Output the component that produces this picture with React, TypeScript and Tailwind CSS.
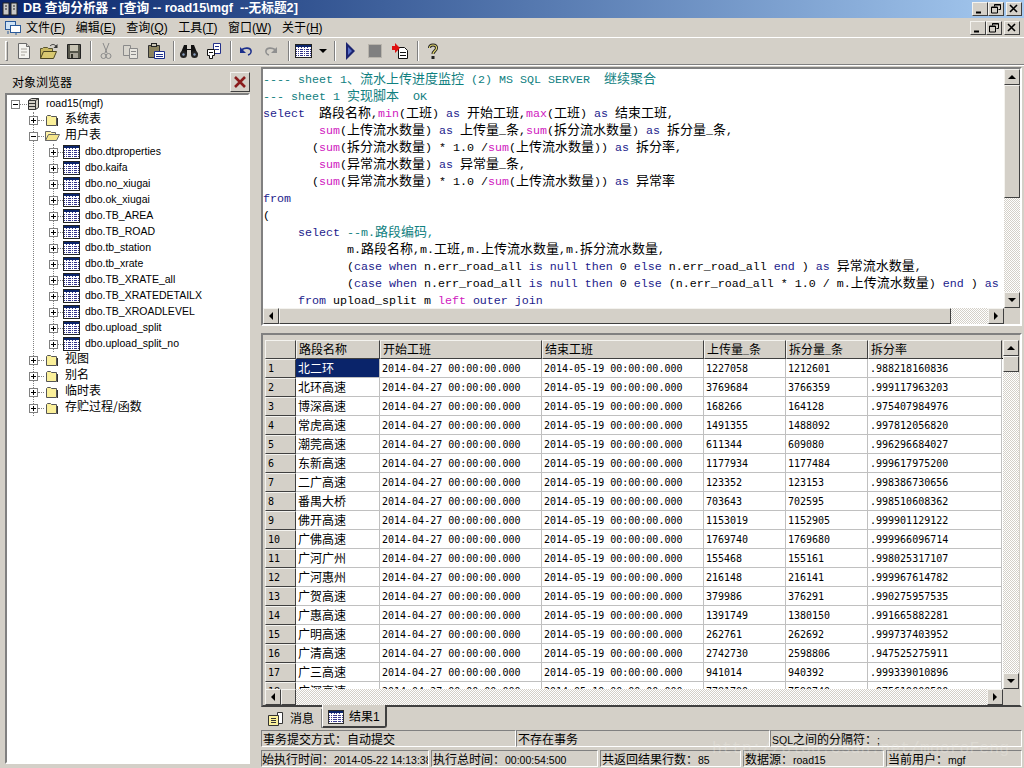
import type { ReactNode } from 'react';

const CJK = /([\u3000-\u9fff\uff00-\uffef]+)/;

// latin and CJK need different sizes to get the half-width grid of the old GDI fonts
function Mixed({ text, latin, cjk }: { text: string; latin: string; cjk: string }) {
  return (
    <>
      {text.split(CJK).map((part, i) =>
        part === '' ? null : (
          <span key={i} className={i % 2 === 1 ? cjk : latin}>
            {part}
          </span>
        ),
      )}
    </>
  );
}

function Arrow({ dir, color = '#000' }: { dir: 'up' | 'down' | 'left' | 'right'; color?: string }) {
  const pts = {
    up: '4,1 0,5 8,5',
    down: '0,1 8,1 4,5',
    left: '5,0 5,8 1,4',
    right: '1,0 1,8 5,4',
  }[dir];
  const size = dir === 'up' || dir === 'down' ? 'w-2 h-[6px]' : 'w-[6px] h-2';
  return (
    <svg className={size} viewBox={dir === 'up' || dir === 'down' ? '0 0 8 6' : '0 0 6 8'}>
      <polygon points={pts} fill={color} />
    </svg>
  );
}

const raised = 'border border-t-[#f4f3ef] border-l-[#f4f3ef] border-r-[#404040] border-b-[#404040] bg-[#d4d0c8]';
const sunken = 'border border-t-[#808080] border-l-[#808080] border-r-white border-b-white';
const dither = 'bg-[image:repeating-conic-gradient(#d4d0c8_0_25%,#ffffff_0_50%)] bg-[length:2px_2px]';

function ScrollBtn({ dir, className = '' }: { dir: 'up' | 'down' | 'left' | 'right'; className?: string }) {
  return (
    <div className={`${raised} flex shrink-0 items-center justify-center ${className}`}>
      <Arrow dir={dir} />
    </div>
  );
}

function WinBtn({ kind }: { kind: 'min' | 'max' | 'close' }) {
  return (
    <div className={`${raised} flex h-[14px] w-4 items-center justify-center`}>
      <svg className="h-[10px] w-[10px]" viewBox="0 0 10 10" fill="none" stroke="#000">
        {kind === 'min' && <path d="M1 8.500h5" strokeWidth="2" />}
        {kind === 'max' && <path d="M3.500 2.500V.5h6v5h-2M.5 4V3h6v6h-6zM.5 3.500h6M3.500 1h6" />}
        {kind === 'close' && <path d="M1 1l7 7M8 1L1 8" strokeWidth="1.600" />}
      </svg>
    </div>
  );
}

/* ---------- toolbar icons ---------- */

function NewIcon() {
  return (
    <svg className="h-5 w-5" viewBox="0 0 20 20">
      <path d="M4.500 2.500h8l3 3v12h-11z" fill="#f4f3ef" stroke="#6a6a6a" />
      <path d="M12.500 2.500v3h3" fill="#d4d0c8" stroke="#6a6a6a" />
      <path d="M7 8h6M7 11h6M7 14h4" stroke="#a8a49c" />
    </svg>
  );
}

function OpenIcon() {
  return (
    <svg className="h-5 w-5" viewBox="0 0 20 20">
      <path d="M1.500 17.500v-10h2l1-1h4l1 1h4v3" fill="#c8b860" stroke="#5a5530" />
      <path d="M1.500 17.500l3-7h13l-3 7z" fill="#d8c870" stroke="#4a4520" />
      <path d="M11 5c2-2 4-2 6 0" fill="none" stroke="#333" />
      <path d="M18.500 3v4h-4z" fill="#333" />
    </svg>
  );
}

function SaveIcon() {
  return (
    <svg className="h-5 w-5" viewBox="0 0 20 20">
      <path d="M3.500 3.500h13v14h-13z" fill="#55554a" stroke="#222" />
      <rect x="6" y="4" width="8" height="6" fill="#c8c4b4" />
      <rect x="6" y="12" width="8" height="5" fill="#a8a498" />
      <rect x="7" y="13" width="2" height="4" fill="#33332a" />
    </svg>
  );
}

function CutIcon() {
  return (
    <svg className="h-5 w-5" viewBox="0 0 20 20" fill="none" stroke="#8a8a8a">
      <path d="M7 2l4 10M13 2l-4 10" />
      <circle cx="7.500" cy="15" r="2.500" />
      <circle cx="12.500" cy="15" r="2.500" />
    </svg>
  );
}

function CopyIcon() {
  return (
    <svg className="h-5 w-5" viewBox="0 0 20 20" stroke="#8a8a8a">
      <path d="M2.500 4.500h7v10h-7z" fill="#d8d5cd" />
      <path d="M8.500 7.500h8v10h-8z" fill="#e8e6e0" />
      <path d="M10 10.500h5M10 13.500h5" />
    </svg>
  );
}

function PasteIcon() {
  return (
    <svg className="h-5 w-5" viewBox="0 0 20 20">
      <path d="M2.500 4.500h11v12h-11z" fill="#8c8460" stroke="#333" />
      <rect x="5.500" y="2.500" width="5" height="3" fill="#c8c4b4" stroke="#222" />
      <path d="M8.500 10.500h10v7h-10z" fill="#fff" stroke="#1c2f8c" />
      <path d="M10 13.500h7M10 15.500h7" stroke="#1c2f8c" />
    </svg>
  );
}

function BinocularsIcon() {
  return (
    <svg className="h-5 w-5" viewBox="0 0 20 20" fill="#111">
      <path d="M5 4h3v4h4V4h3l4 10h-7V9H8v5H1z" />
      <circle cx="4.500" cy="13.500" r="3.500" fill="#222" />
      <circle cx="15.500" cy="13.500" r="3.500" fill="#222" />
      <circle cx="4.500" cy="13.500" r="1.200" fill="#8aa0c0" />
      <circle cx="15.500" cy="13.500" r="1.200" fill="#8aa0c0" />
    </svg>
  );
}

function ReplaceIcon() {
  return (
    <svg className="h-5 w-5" viewBox="0 0 20 20">
      <path d="M9.500 2.500h7v10h-7z" fill="#fff" stroke="#23308a" />
      <path d="M11 5.500h4M11 8.500h4" stroke="#23308a" />
      <path d="M3.500 8.500h7v6h-2v3h-3v-3h-2z" fill="#fff" stroke="#111" />
      <path d="M5 11.500h4" stroke="#111" />
    </svg>
  );
}

function UndoIcon({ off }: { off?: boolean }) {
  const c = off ? '#8f8f8f' : '#1c2f8c';
  return (
    <svg className={`h-5 w-5 ${off ? '-scale-x-100' : ''}`} viewBox="0 0 20 20" fill="none">
      <path d="M6 8.500c3-2 8-2 9 1 .5 2-1 4-3 4.500" stroke={c} strokeWidth="1.600" />
      <path d="M4 6v6h6z" fill={c} />
    </svg>
  );
}

function TableIcon({ className = 'h-5 w-5' }: { className?: string }) {
  return (
    <svg className={className} viewBox="0 0 17 14" shapeRendering="crispEdges">
      <rect x="0.500" y="0.500" width="16" height="13" fill="#fff" stroke="#222" />
      <rect x="1" y="1" width="15" height="2" fill="#0a246a" />
      <path
        d="M1 5.500h15M1 7.500h15M1 9.500h15M1 11.500h15M3.500 3v10M6.500 3v10M9.500 3v10M12.500 3v10"
        stroke="#33338a"
        strokeDasharray="1 1"
      />
    </svg>
  );
}

function RunIcon() {
  return (
    <svg className="h-5 w-5" viewBox="0 0 20 20">
      <path d="M6 1l9 9-9 9z" fill="#1c2470" />
      <path d="M8 6l4 4-4 4z" fill="#5a70c8" />
    </svg>
  );
}

function ExecDocIcon() {
  return (
    <svg className="h-5 w-5" viewBox="0 0 20 20">
      <path d="M8.500 6.500h6l3 3v8h-9z" fill="#fff" stroke="#111" />
      <path d="M10 11.500h6M10 14.500h6" stroke="#111" />
      <path d="M2 5h3V2l5 5-5 5V9H2z" fill="#e01010" />
    </svg>
  );
}

function HelpIcon() {
  return (
    <svg className="h-5 w-5" viewBox="0 0 20 20" fill="none">
      <path d="M6.500 7c0-4 7-4 7 0 0 3-3.500 3-3.500 6" stroke="#222" strokeWidth="3" />
      <path d="M6.500 7c0-4 7-4 7 0 0 3-3.500 3-3.500 6" stroke="#e8dc70" strokeWidth="1.200" />
      <rect x="8.500" y="15" width="3" height="3" fill="#222" />
    </svg>
  );
}

function Sep() {
  return <div className="ml-[4px] mr-[1.5px] h-[20px] w-[2px] shrink-0 border-l border-r border-l-[#808080] border-r-white" />;
}

function Tool({ children, w = 'w-[25px]' }: { children: ReactNode; w?: string }) {
  return <div className={`flex h-[22px] shrink-0 items-center justify-center ${w}`}>{children}</div>;
}

/* ---------- tree ---------- */

function Expander({ open, className = '' }: { open?: boolean; className?: string }) {
  return (
    <div className={`relative z-10 flex h-[9px] w-[9px] shrink-0 items-center justify-center border border-[#808080] bg-white ${className}`}>
      <svg className="h-[7px] w-[7px]" viewBox="0 0 7 7" stroke="#000">
        <path d="M1 3.500h5" />
        {!open && <path d="M3.500 1v5" />}
      </svg>
    </div>
  );
}

function Folder({ open }: { open?: boolean }) {
  return (
    <svg className="h-[14px] w-[16px] shrink-0" viewBox="0 0 16 14">
      {open ? (
        <>
          <path d="M1.500 11.500v-9h5l1 1h4v2" fill="#fff3a8" stroke="#666" />
          <path d="M1.500 11.500l3-6h11l-3 6z" fill="#f5e58a" stroke="#666" />
        </>
      ) : (
        <>
          <path d="M2.500 12.500v-9l1-1h3l1 1h5v9z" fill="#fbf09a" stroke="#555" />
          <path d="M13.500 5v8" stroke="#333" />
        </>
      )}
    </svg>
  );
}

function Dash({ w }: { w: string }) {
  return <div className={`h-0 shrink-0 border-t border-dotted border-[#808080] ${w}`} />;
}

const treeCjk = "font-['Noto_Sans_CJK_SC'] text-[12px]";

function FolderRow({ label, open, last }: { label: string; open?: boolean; last?: boolean }) {
  return (
    <div className={`flex h-4 items-center ${last ? 'bg-white' : ''}`}>
      <Expander open={open} className="-ml-[5px]" />
      <Dash w="w-[6px]" />
      <Folder open={open} />
      <span className={`-mt-[4px] ml-[5px] leading-[12px] ${treeCjk}`}>{label}</span>
    </div>
  );
}

function TableRow({ label }: { label: string }) {
  return (
    <div className="flex h-4 items-center">
      <Expander className="-ml-[5px]" />
      <Dash w="w-[5px]" />
      <TableIcon className="h-[14px] w-[17px] shrink-0" />
      <span className="ml-[5px] text-[10.5px]">{label}</span>
    </div>
  );
}

const tables = [
  'dbo.dtproperties', 'dbo.kaifa', 'dbo.no_xiugai', 'dbo.ok_xiugai', 'dbo.TB_AREA', 'dbo.TB_ROAD',
  'dbo.tb_station', 'dbo.tb_xrate', 'dbo.TB_XRATE_all', 'dbo.TB_XRATEDETAILX', 'dbo.TB_XROADLEVEL',
  'dbo.upload_split', 'dbo.upload_split_no',
];

/* ---------- editor ---------- */

type Tok = [string, string?];
const K = 'text-[#1c1c8c]';
const F = 'text-[#d020c0]';
const C = 'text-[#0f8080]';

const sqlLines: Tok[][] = [
  [['---- sheet 1、流水上传进度监控 (2) MS SQL SERVER  继续聚合', C]],
  [['--- sheet 1 实现脚本  OK', C]],
  [['select', K], ['  路段名称,'], ['min', F], ['(工班) '], ['as', K], [' 开始工班,'], ['max', F], ['(工班) '], ['as', K], [' 结束工班,']],
  [['        '], ['sum', F], ['(上传流水数量) '], ['as', K], [' 上传量_条,'], ['sum', F], ['(拆分流水数量) '], ['as', K], [' 拆分量_条,']],
  [['       ('], ['sum', F], ['(拆分流水数量) * 1.0 /'], ['sum', F], ['(上传流水数量)) '], ['as', K], [' 拆分率,']],
  [['        '], ['sum', F], ['(异常流水数量) '], ['as', K], [' 异常量_条,']],
  [['       ('], ['sum', F], ['(异常流水数量) * 1.0 /'], ['sum', F], ['(上传流水数量)) '], ['as', K], [' 异常率']],
  [['from', K]],
  [['(']],
  [['     '], ['select', K], [' --m.路段编码,', C]],
  [['            m.路段名称,m.工班,m.上传流水数量,m.拆分流水数量,']],
  [['            ('], ['case when', K], [' n.err_road_all '], ['is null then', K], [' 0 '], ['else', K], [' n.err_road_all '], ['end', K], [' ) '], ['as', K], [' 异常流水数量,']],
  [['            ('], ['case when', K], [' n.err_road_all '], ['is null then', K], [' 0 '], ['else', K], [' (n.err_road_all * 1.0 / m.上传流水数量) '], ['end', K], [' ) '], ['as', K]],
  [['     '], ['from', K], [' upload_split m '], ['left', F], [' '], ['outer join', K]],
];

/* ---------- grid ---------- */

const columns = [
  { title: '路段名称', w: 'w-[84px]' },
  { title: '开始工班', w: 'w-[162px]' },
  { title: '结束工班', w: 'w-[162px]' },
  { title: '上传量_条', w: 'w-[82px]' },
  { title: '拆分量_条', w: 'w-[82px]' },
  { title: '拆分率', w: 'w-[134px]' },
];

const rows = [
  ['北二环', '1227058', '1212601', '.988218160836'],
  ['北环高速', '3769684', '3766359', '.999117963203'],
  ['博深高速', '168266', '164128', '.975407984976'],
  ['常虎高速', '1491355', '1488092', '.997812056820'],
  ['潮莞高速', '611344', '609080', '.996296684027'],
  ['东新高速', '1177934', '1177484', '.999617975200'],
  ['二广高速', '123352', '123153', '.998386730656'],
  ['番禺大桥', '703643', '702595', '.998510608362'],
  ['佛开高速', '1153019', '1152905', '.999901129122'],
  ['广佛高速', '1769740', '1769680', '.999966096714'],
  ['广河广州', '155468', '155161', '.998025317107'],
  ['广河惠州', '216148', '216141', '.999967614782'],
  ['广贺高速', '379986', '376291', '.990275957535'],
  ['广惠高速', '1391749', '1380150', '.991665882281'],
  ['广明高速', '262761', '262692', '.999737403952'],
  ['广清高速', '2742730', '2598806', '.947525275911'],
  ['广三高速', '941014', '940392', '.999339010896'],
  ['广深高速', '7781700', '7590740', '.975619000500'],
];

const gridLatin = "font-['DejaVu_Sans_Mono'] text-[10px]";
const gridCjk = "font-['Noto_Sans_CJK_SC'] text-[12px]";

function GridCell({ w, children, selected }: { w: string; children: ReactNode; selected?: boolean }) {
  return (
    <div
      className={`flex h-[19px] shrink-0 items-center overflow-hidden whitespace-pre border-r border-b border-[#c0c0c0] pl-[2px] ${w} ${
        selected ? 'bg-[#0a246a] text-white' : ''
      }`}
    >
      {children}
    </div>
  );
}

function StatusCell({ text, className, pull }: { text: string; className: string; pull?: boolean }) {
  return (
    <div className={`h-[17px] shrink-0 overflow-hidden whitespace-pre ${sunken} pl-[1px] leading-[15px] ${className}`}>
      <span className={pull ? 'relative -left-[1px]' : ''}>
        <Mixed text={text} latin="font-['Liberation_Sans'] text-[10.5px]" cjk="font-['Noto_Sans_CJK_SC'] text-[12px]" />
      </span>
    </div>
  );
}

export default function App() {
  return (
    <div className="relative flex h-[768px] w-[1024px] flex-col overflow-hidden bg-[#d4d0c8] font-['Liberation_Sans','Noto_Sans_CJK_SC',sans-serif] text-black">
      {/* title bar */}
      <div className="flex h-[18px] shrink-0 items-center bg-gradient-to-r from-[#0a246a] to-[#a6caf0] pl-[2px] pr-[2px]">
        <svg className="h-4 w-4 shrink-0" viewBox="0 0 16 16">
          <rect x="1" y="2" width="6" height="12" fill="#c8c8c8" stroke="#222" />
          <rect x="9" y="2" width="6" height="12" fill="#c8c8c8" stroke="#222" />
          <path d="M3 5h2M11 5h2M3 8h2M11 8h2" stroke="#222" />
        </svg>
        <span className="ml-[5px] whitespace-pre text-[12.7px] font-bold text-white">DB 查询分析器 - [查询 -- road15\mgf  --无标题2]</span>
        <div className="ml-auto flex">
          <WinBtn kind="min" />
          <WinBtn kind="max" />
          <div className="ml-[2px]">
            <WinBtn kind="close" />
          </div>
        </div>
      </div>

      {/* menu bar */}
      <div className="flex h-[19px] shrink-0 items-center pr-[4px]">
        <svg className="ml-[5px] h-4 w-4 shrink-0" viewBox="0 0 16 16">
          <rect x="0.500" y="1.500" width="10" height="8" fill="#cfe3f5" stroke="#2a5a9a" />
          <rect x="5.500" y="5.500" width="10" height="7" fill="#fff" stroke="#2a5a9a" />
          <path d="M3 11v3M11 13v2" stroke="#2a5a9a" />
        </svg>
        <div className="ml-[5px] flex gap-[10.5px] text-[12px]">
          <span>文件(<u>F</u>)</span>
          <span>编辑(<u>E</u>)</span>
          <span>查询(<u>Q</u>)</span>
          <span>工具(<u>T</u>)</span>
          <span>窗口(<u>W</u>)</span>
          <span>关于(<u>H</u>)</span>
        </div>
        <div className="ml-auto flex">
          <WinBtn kind="min" />
          <WinBtn kind="max" />
          <div className="ml-[2px]">
            <WinBtn kind="close" />
          </div>
        </div>
      </div>

      {/* toolbar */}
      <div className="flex h-[28px] shrink-0 items-center border-t border-b border-t-white border-b-[#808080] pl-[5px]">
        <div className="mr-[3px] h-[20px] w-[3px] shrink-0 border border-t-white border-l-white border-r-[#808080] border-b-[#808080]" />
        <Tool><NewIcon /></Tool>
        <Tool><OpenIcon /></Tool>
        <Tool><SaveIcon /></Tool>
        <Sep />
        <Tool><CutIcon /></Tool>
        <Tool><CopyIcon /></Tool>
        <Tool><PasteIcon /></Tool>
        <Sep />
        <Tool><BinocularsIcon /></Tool>
        <Tool><ReplaceIcon /></Tool>
        <Sep />
        <Tool><UndoIcon /></Tool>
        <Tool><UndoIcon off /></Tool>
        <Sep />
        <Tool><TableIcon className="h-[14px] w-[17px]" /></Tool>
        <Tool w="w-[14px]"><Arrow dir="down" /></Tool>
        <Sep />
        <Tool><RunIcon /></Tool>
        <Tool><div className="h-[14px] w-[14px] border border-[#b8b4ac] bg-[#808080]" /></Tool>
        <Tool><ExecDocIcon /></Tool>
        <Sep />
        <Tool><HelpIcon /></Tool>
      </div>

      <div className="flex min-h-0 flex-1 border-t border-t-white">
        {/* object browser */}
        <div className="flex w-[253px] shrink-0 flex-col pb-[4px] pl-[5px] pr-[3px] pt-[5px]">
          <div className="flex h-[21px] shrink-0 items-center justify-between">
            <span className="pl-[7px] pt-[3px] text-[12px]">对象浏览器</span>
            <div className={`${raised} flex h-[20px] w-[20px] items-center justify-center`}>
              <svg className="h-[14px] w-[14px]" viewBox="0 0 14 14" fill="none" stroke="#8a1c1c" strokeWidth="2.600">
                <path d="M2 2l10 10M12 2L2 12" />
              </svg>
            </div>
          </div>
          <div className={`mt-[1px] min-h-0 flex-1 ${sunken} border-2 bg-white pt-[1px]`}>
            <div className="ml-[4px] flex h-4 items-center">
              <Expander open />
              <Dash w="w-[7px]" />
              <svg className="h-[14px] w-[13px] shrink-0" viewBox="0 0 13 14">
                <path d="M1.500 3.500l3-2h7v9l-3 2h-7z" fill="#d4d0c8" stroke="#333" />
                <path d="M1.500 3.500h7v9M8.500 3.500l3-2M1.500 6.500h7M1.500 9.500h7" fill="none" stroke="#333" />
              </svg>
              <span className="ml-[6px] text-[10.5px]">road15(mgf)</span>
            </div>
            <div className="ml-[26px] border-l border-dotted border-[#808080]">
              <FolderRow label="系统表" />
              <FolderRow label="用户表" open />
              <div className="ml-[19px] border-l border-dotted border-[#808080]">
                {tables.map((t) => (
                  <TableRow key={t} label={t} />
                ))}
              </div>
              <FolderRow label="视图" />
              <FolderRow label="别名" />
              <FolderRow label="临时表" />
              <FolderRow label="存贮过程/函数" last />
            </div>
          </div>
        </div>

        {/* right side */}
        <div className="flex min-w-0 flex-1 flex-col pl-[8px] pr-[2px] pt-[1px]">
          {/* sql editor */}
          <div className={`flex h-[259px] shrink-0 flex-col ${sunken} border-2`}>
            <div className="flex min-h-0 flex-1">
              <div className="min-w-0 flex-1 overflow-hidden whitespace-pre bg-white">
                {sqlLines.map((line, i) => (
                  <div key={i} className="h-[17px] leading-[17px]">
                    {line.map(([text, color], j) => (
                      <span key={j} className={color}>
                        <Mixed text={text} latin="font-['Liberation_Mono'] text-[11.67px]" cjk="font-['Noto_Sans_CJK_SC'] text-[13px]" />
                      </span>
                    ))}
                  </div>
                ))}
              </div>
              <div className={`flex w-4 shrink-0 flex-col ${dither}`}>
                <ScrollBtn dir="up" className="h-4 w-4" />
                <div className={`${raised} h-[113px] w-4`} />
                <div className="flex-1" />
                <ScrollBtn dir="down" className="h-4 w-4" />
              </div>
            </div>
            <div className={`flex h-4 shrink-0 ${dither}`}>
              <ScrollBtn dir="left" className="h-4 w-4" />
              <div className={`${raised} h-4 w-[672px]`} />
              <div className="flex-1" />
              <ScrollBtn dir="right" className="h-4 w-4" />
              <div className="w-4 bg-[#d4d0c8]" />
            </div>
          </div>

          {/* results pane */}
          <div className="mt-[7px] flex h-[374px] shrink-0 flex-col border-2 border-b-[#404040] border-l-[#808080] border-r-white border-t-[#808080] pl-[2px] pr-[2px] pt-[5px]">
            <div className="flex min-h-0 flex-1">
              <div className="flex w-[738px] shrink-0 flex-col">
                <div className="flex h-[19px] shrink-0 border-b border-black">
                  <div className={`${raised} h-[19px] w-[31px] shrink-0`} />
                  {columns.map((c) => (
                    <div key={c.title} className={`${raised} flex h-[19px] shrink-0 items-center whitespace-pre pb-[2px] pl-[2px] ${c.w}`}>
                      <Mixed text={c.title} latin={gridLatin} cjk={gridCjk} />
                    </div>
                  ))}
                </div>
                <div className="min-h-0 flex-1 overflow-hidden bg-white">
                  {rows.map((r, i) => (
                    <div key={i} className="flex h-[19px]">
                      <div className={`${raised} flex h-[19px] w-[31px] shrink-0 items-center pl-[2px] ${gridLatin}`}>{i + 1}</div>
                      <GridCell w="w-[84px]" selected={i === 0}>
                        <span className={gridCjk}>{r[0]}</span>
                      </GridCell>
                      <GridCell w="w-[162px]">
                        <span className={gridLatin}>2014-04-27 00:00:00.000</span>
                      </GridCell>
                      <GridCell w="w-[162px]">
                        <span className={gridLatin}>2014-05-19 00:00:00.000</span>
                      </GridCell>
                      <GridCell w="w-[82px]">
                        <span className={gridLatin}>{r[1]}</span>
                      </GridCell>
                      <GridCell w="w-[82px]">
                        <span className={gridLatin}>{r[2]}</span>
                      </GridCell>
                      <GridCell w="w-[134px]">
                        <span className={gridLatin}>{r[3]}</span>
                      </GridCell>
                    </div>
                  ))}
                </div>
                <div className={`flex h-4 shrink-0 ${dither}`}>
                  <ScrollBtn dir="left" className="h-4 w-4" />
                  <div className={`${raised} h-4 w-[15px]`} />
                  <div className="flex-1" />
                  <ScrollBtn dir="right" className="h-4 w-4" />
                </div>
              </div>
              <div className="flex w-4 shrink-0 flex-col">
                <div className={`flex min-h-0 flex-1 flex-col ${dither}`}>
                  <ScrollBtn dir="up" className="h-4 w-4" />
                  <div className={`${raised} h-4 w-4`} />
                  <div className="flex-1" />
                  <ScrollBtn dir="down" className="h-4 w-4" />
                </div>
                <div className="h-4 shrink-0" />
              </div>
            </div>
          </div>

          {/* tabs */}
          <div className="flex h-[23px] shrink-0 items-start pl-[3px]">
            <div className="mt-[2px] flex h-[19px] w-[58px] items-center border-r border-[#808080]">
              <svg className="ml-[4px] h-[14px] w-[16px] shrink-0" viewBox="0 0 16 14">
                <path d="M9.500 .5h5v11h-5z" fill="#fff" stroke="#333" />
                <path d="M.5 3.500h10v10h-10z" fill="#fbf09a" stroke="#333" />
                <path d="M3 6.500h5M3 8.500h5M3 10.500h5" stroke="#333" />
              </svg>
              <span className="ml-[6px] text-[12px]">消息</span>
            </div>
            <div className="-mt-[2px] flex h-[23px] w-[65px] items-center rounded-br-[3px] border-b-2 border-l border-r-2 border-b-[#404040] border-l-white border-r-[#404040] bg-[#d4d0c8] pt-[3px]">
              <TableIcon className="ml-[5px] h-[14px] w-[16px] shrink-0" />
              <span className="ml-[5px] text-[12px]">结果1</span>
            </div>
          </div>

          {/* status rows */}
          <div className="flex shrink-0 gap-0">
            <StatusCell className="w-[255px]" text="事务提交方式：自动提交" />
            <StatusCell className="w-[254px]" text="不存在事务" />
            <StatusCell className="flex-1" text="SQL之间的分隔符：;" />
          </div>
          <div className="mt-[3px] flex shrink-0 gap-[2px]">
            <StatusCell className="w-[168px]" text="始执行时间：2014-05-22 14:13:38" pull />
            <StatusCell className="w-[167px]" text="执行总时间：00:00:54:500" />
            <StatusCell className="w-[141px]" text="共返回结果行数：85" />
            <StatusCell className="w-[141px]" text="数据源：road15" />
            <StatusCell className="flex-1" text="当前用户：mgf" />
          </div>
        </div>
      </div>

      {/* image host watermark */}
      <span className="pointer-events-none absolute left-[712px] top-[737px] whitespace-pre font-['Liberation_Mono'] text-[16.5px] text-[#f0eee8] opacity-30">
        http://blog.csdn.net/mgoroFeng
      </span>
    </div>
  );
}
